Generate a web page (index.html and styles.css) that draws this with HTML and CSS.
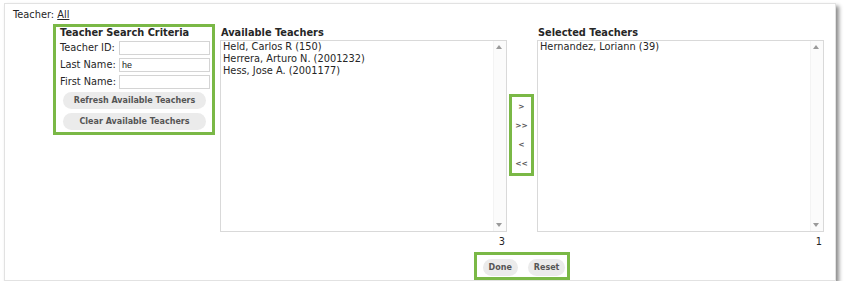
FILE: index.html
```html
<!DOCTYPE html>
<html lang="en">
<head>
  <meta charset="UTF-8" />
  <title>Teacher Picker</title>
  <link rel="stylesheet" href="styles.css">
</head>
<body>
  <div class="panel">
    <!-- Current filter -->
    <div class="filter-line">Teacher: <a href="#">All</a></div>

    <div class="picker">
      <!-- Search criteria -->
      <div class="criteria hl">
        <div class="criteria-title">Teacher Search Criteria</div>
        <div class="criteria-fields">
          <label>Teacher ID:</label><input type="text" value="">
          <label>Last Name:</label><input type="text" value="he">
          <label>First Name:</label><input type="text" value="">
        </div>
        <button class="pill wide">Refresh Available Teachers</button>
        <button class="pill wide">Clear Available Teachers</button>
      </div>

      <!-- Dual list chooser -->
      <div class="chooser">
        <div class="lists">
          <div class="list-col">
            <div class="list-title">Available Teachers</div>
            <div class="listbox">
              <ul>
                <li>Held, Carlos R (150)</li>
                <li>Herrera, Arturo N. (2001232)</li>
                <li>Hess, Jose A. (2001177)</li>
              </ul>
              <div class="scroll"><span class="up"></span><span class="down"></span></div>
            </div>
            <div class="count">3</div>
          </div>

          <div class="move hl">
            <button>&gt;</button>
            <button>&gt;&gt;</button>
            <button>&lt;</button>
            <button>&lt;&lt;</button>
          </div>

          <div class="list-col">
            <div class="list-title">Selected Teachers</div>
            <div class="listbox">
              <ul>
                <li>Hernandez, Loriann (39)</li>
              </ul>
              <div class="scroll"><span class="up"></span><span class="down"></span></div>
            </div>
            <div class="count">1</div>
          </div>
        </div>

        <div class="actions hl">
          <button class="pill">Done</button>
          <button class="pill">Reset</button>
        </div>
      </div>
    </div>
  </div>
</body>
</html>
```

FILE: styles.css
```css
/* ---- Global ---- */
html, body {
  margin: 0;
  padding: 0;
  background: #ffffff;
  font-family: "DejaVu Sans", Verdana, sans-serif;
  font-size: 9.8px;
  line-height: 12px;
  color: #262626;
}

/* ---- Panel ---- */
.panel {
  margin: 3px 0 0 4px;
  width: 830px;
  border: 1px solid #e2e2e2;
  box-shadow: 3px 3px 4px rgba(0, 0, 0, 0.45);
  background: #ffffff;
}

.filter-line {
  padding: 5px 0 0 8px;
  height: 12px;
}
.filter-line a {
  color: #262626;
  text-decoration: underline;
}

/* green highlight boxes */
.hl {
  border: 3px solid #7ab846;
}

.picker {
  display: flex;
  align-items: flex-start;
  margin-top: 3px;
  padding-left: 48px;
}

/* ---- Criteria ---- */
.criteria {
  width: 150px;
  padding: 0 2px 2px 4px;
}
.criteria-title {
  font-weight: bold;
  margin-bottom: 2px;
}
.criteria-fields {
  display: grid;
  grid-template-columns: 59px 91px;
  row-gap: 3px;
  align-items: center;
  margin-bottom: 3px;
}
.criteria-fields input {
  box-sizing: border-box;
  width: 91px;
  height: 14px;
  margin: 0;
  padding: 0 2px;
  border: 1px solid #d4d4d4;
  font-family: "Liberation Sans", Arial, sans-serif;
  font-size: 9px;
  color: #222;
}

.pill {
  display: block;
  height: 17px;
  padding: 0;
  border: none;
  border-radius: 9px;
  background: #ebebeb;
  color: #555;
  font-family: "DejaVu Sans", Verdana, sans-serif;
  font-weight: bold;
  font-size: 8px;
  cursor: pointer;
}
.pill.wide {
  width: 143px;
  margin-left: 3px;
}
.pill.wide + .pill.wide {
  margin-top: 4px;
}

/* ---- Lists ---- */
.chooser {
  display: flex;
  flex-direction: column;
  margin-left: 5px;
}
.lists {
  display: flex;
  align-items: flex-start;
}
.list-col {
  width: 287px;
}
.list-title {
  font-weight: bold;
  padding: 3px 0 0 1px;
  height: 13px;
}
.listbox {
  position: relative;
  box-sizing: border-box;
  height: 192px;
  border: 1px solid #d9d9d9;
  display: flex;
}
.listbox ul {
  flex: 1;
  list-style: none;
  margin: 0;
  padding: 0 0 0 2px;
}
.scroll {
  width: 12px;
  border-left: 1px solid #f3f3f3;
  background: #fbfbfb;
}
.scroll span {
  position: absolute;
  right: 4px;
  width: 0;
  height: 0;
  border-left: 3px solid transparent;
  border-right: 3px solid transparent;
}
.scroll .up {
  top: 4px;
  border-bottom: 4px solid #9a9a9a;
}
.scroll .down {
  bottom: 4px;
  border-top: 4px solid #9a9a9a;
}
.count {
  text-align: right;
  padding: 4px 2px 0 0;
}

/* ---- Move buttons ---- */
.move {
  width: 19px;
  margin: 70px 3px 0 2px;
  display: flex;
  flex-direction: column;
  padding: 0;
}
.move button {
  height: 19px;
  padding: 0;
  border: none;
  background: none;
  color: #555;
  font-family: "DejaVu Sans", Verdana, sans-serif;
  font-weight: bold;
  font-size: 7.5px;
  cursor: pointer;
}

/* ---- Actions ---- */
.actions {
  align-self: center;
  display: flex;
  gap: 10px;
  margin-top: 4px;
  padding: 4px 2px 1px 6px;
}
.actions .pill {
  padding: 0 6px;
}
```
